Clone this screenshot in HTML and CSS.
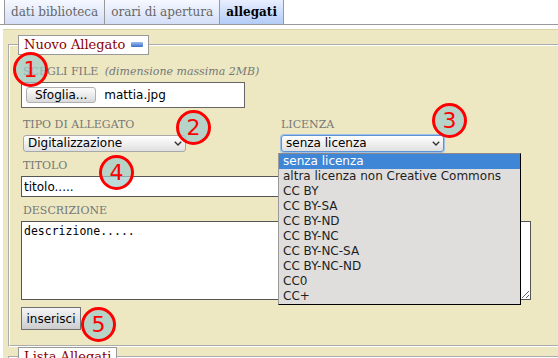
FILE: index.html
```html
<!DOCTYPE html>
<html>
<head>
    <meta charset="utf-8">
    <title>Allegati</title>
    <link rel="stylesheet" href="styles.css">
</head>
<body>
    <ul id="tabs">
        <li class="tab">dati biblioteca</li>
        <li class="tab">orari di apertura</li>
        <li class="tab tab_active">allegati</li>
    </ul>

    <div id="panel">
        <fieldset class="box">
            <legend>Nuovo Allegato <span class="toggle"></span></legend>

            <div class="field field_file">
                <label>SCEGLI FILE <em>(dimensione massima 2MB)</em></label>
                <div class="filebox">
                    <button class="btn_browse">Sfoglia...</button>
                    <span>mattia.jpg</span>
                </div>
            </div>

            <div class="row">
                <div class="field">
                    <label>TIPO DI ALLEGATO</label>
                    <div class="select">
                        <span>Digitalizzazione</span>
                        <svg viewBox="0 0 8 5"><polyline points="0.8,0.8 4,4 7.2,0.8"/></svg>
                    </div>
                </div>
                <div class="field field_license">
                    <label>LICENZA</label>
                    <div class="select select_focus">
                        <span>senza licenza</span>
                        <svg viewBox="0 0 8 5"><polyline points="0.8,0.8 4,4 7.2,0.8"/></svg>
                    </div>
                    <ul class="dropdown">
                        <li class="option_selected">senza licenza</li>
                        <li>altra licenza non Creative Commons</li>
                        <li>CC BY</li>
                        <li>CC BY-SA</li>
                        <li>CC BY-ND</li>
                        <li>CC BY-NC</li>
                        <li>CC BY-NC-SA</li>
                        <li>CC BY-NC-ND</li>
                        <li>CC0</li>
                        <li>CC+</li>
                    </ul>
                </div>
            </div>

            <div class="field">
                <label>TITOLO</label>
                <input type="text" class="input_text" value="titolo.....">
            </div>

            <div class="field">
                <label>DESCRIZIONE</label>
                <textarea class="input_area">descrizione.....</textarea>
            </div>

            <button class="btn_submit">inserisci</button>
        </fieldset>

        <fieldset class="box box_list">
            <legend>Lista Allegati</legend>
        </fieldset>
    </div>

    <span class="marker marker_1">1</span>
    <span class="marker marker_2">2</span>
    <span class="marker marker_3">3</span>
    <span class="marker marker_4">4</span>
    <span class="marker marker_5">5</span>
</body>
</html>
```

FILE: styles.css
```css
* {
    box-sizing: border-box;
}
html, body {
    overflow: hidden;
}
body {
    margin: 0;
    position: relative;
    font-family: "DejaVu Serif", serif;
    background: #fff;
}

/* tabs */
#tabs {
    display: flex;
    margin: 0;
    padding: 0 0 0 4px;
    list-style: none;
    border-bottom: 1px solid #999;
}
.tab {
    height: 24px;
    padding: 0 6px;
    font-size: 12px;
    line-height: 24px;
    color: #666;
    border-right: 1px solid #999;
    background: linear-gradient(#f6f8ff, #d3def7);
}
.tab:first-child {
    border-left: 1px solid #999;
}
.tab_active {
    font-weight: bold;
    color: #000;
    background: linear-gradient(#e8eeff, #b3ccf7);
}

/* panel + fieldsets */
#panel {
    width: 600px;
    margin: 4px 0 0 3px;
    padding: 5px 0 0 5px;
    border-top: 1px solid #d9d3a9;
    background: #ede8c2;
}
.box {
    margin: 0;
    padding: 10px 0 15px 11px;
    border: 2px groove #fff;
    min-width: 0;
}
.box legend {
    margin-left: -3px;
    padding: 0 5px 0 5px;
    height: 20px;
    font-size: 13px;
    line-height: 18px;
    color: #8b0000;
    background: #fff;
    border: 1px solid #999;
}
.box_list {
    height: 60px;
}
.toggle {
    display: inline-block;
    width: 12px;
    height: 5px;
    margin-left: 1px;
    vertical-align: 2px;
    border-radius: 1px;
    background: linear-gradient(#9dbdf0, #3c6fcc);
}

/* fields */
.field {
    margin-bottom: 7px;
}
.field_file {
    margin-bottom: 10px;
}
.field label {
    display: block;
    height: 14px;
    margin: 0 0 3px 2px;
    font-size: 11px;
    line-height: 14px;
    color: #777;
}
.field label em {
    margin-left: 3px;
}
.row {
    display: grid;
    grid-template-columns: 258px 258px;
    margin-bottom: 7px;
}
.row .field {
    margin-bottom: 0;
}
.field_license {
    position: relative;
}

.filebox {
    display: flex;
    align-items: center;
    gap: 8px;
    width: 224px;
    height: 26px;
    padding: 0 4px;
    border: 1px solid #666;
    background: #fff;
    font: 12px "DejaVu Sans", sans-serif;
}
.btn_browse {
    height: 16px;
    padding: 0 8px;
    font: 12px/14px "DejaVu Sans", sans-serif;
    color: #000;
    border: 1px solid #b0b0b0;
    border-radius: 3px;
    background: linear-gradient(#fdfdfd, #dadada);
}

.select {
    display: flex;
    align-items: center;
    justify-content: space-between;
    width: 163px;
    height: 17px;
    margin-left: 2px;
    padding: 0 3px 0 4px;
    font: 12px/15px "DejaVu Sans", sans-serif;
    color: #000;
    border: 1px solid #a8a8a8;
    border-radius: 3px;
    background: linear-gradient(#fff, #e0e0e0);
}
.select svg {
    width: 8px;
    height: 5px;
    fill: none;
    stroke: #333;
    stroke-width: 1.4;
}
.select_focus {
    border-color: #5a93d6;
    box-shadow: 0 0 0 1px #9cc0ea;
}

.dropdown {
    position: absolute;
    top: 35px;
    left: -1px;
    z-index: 1;
    width: 243px;
    margin: 0;
    padding: 0;
    list-style: none;
    font: 12px/15px "DejaVu Sans", sans-serif;
    color: #1e1e1e;
    background: #dfdedd;
    border: 1px solid #000;
    border-left-color: #9a9a9a;
    border-top-color: #8a8a8a;
}
.dropdown li {
    height: 15px;
    padding-left: 4px;
    white-space: nowrap;
}
.dropdown .option_selected {
    color: #fff;
    background: #3f87d6;
}

.input_text {
    display: block;
    width: 420px;
    height: 21px;
    margin: 0;
    padding: 0 2px;
    font: 12px "DejaVu Sans", sans-serif;
    color: #000;
    border: 1px solid #555;
    background: #fff;
}
.input_area {
    display: block;
    width: 510px;
    height: 79px;
    margin: 0;
    padding: 2px 2px;
    font: 11.5px/15px "DejaVu Sans Mono", monospace;
    color: #000;
    border: 1px solid #555;
    background: #fff;
}

.btn_submit {
    display: block;
    width: 60px;
    height: 23px;
    padding: 0;
    font: 12px "DejaVu Sans", sans-serif;
    color: #000;
    border: 1px solid #707070;
    border-radius: 0;
    background: linear-gradient(#f5f5f5, #cdcdcd);
}

/* numbered markers */
.marker {
    position: absolute;
    z-index: 2;
    width: 35px;
    height: 35px;
    border: 3px solid #f00;
    border-radius: 50%;
    background: rgba(158, 203, 203, 0.7);
    color: #f00;
    font: 22px/29px "DejaVu Sans", sans-serif;
    text-align: center;
}
.marker_1 { left: 13px; top: 52px; }
.marker_2 { left: 176px; top: 110px; }
.marker_3 { left: 432px; top: 103px; }
.marker_4 { left: 99px; top: 155px; }
.marker_5 { left: 81px; top: 307px; }
```
